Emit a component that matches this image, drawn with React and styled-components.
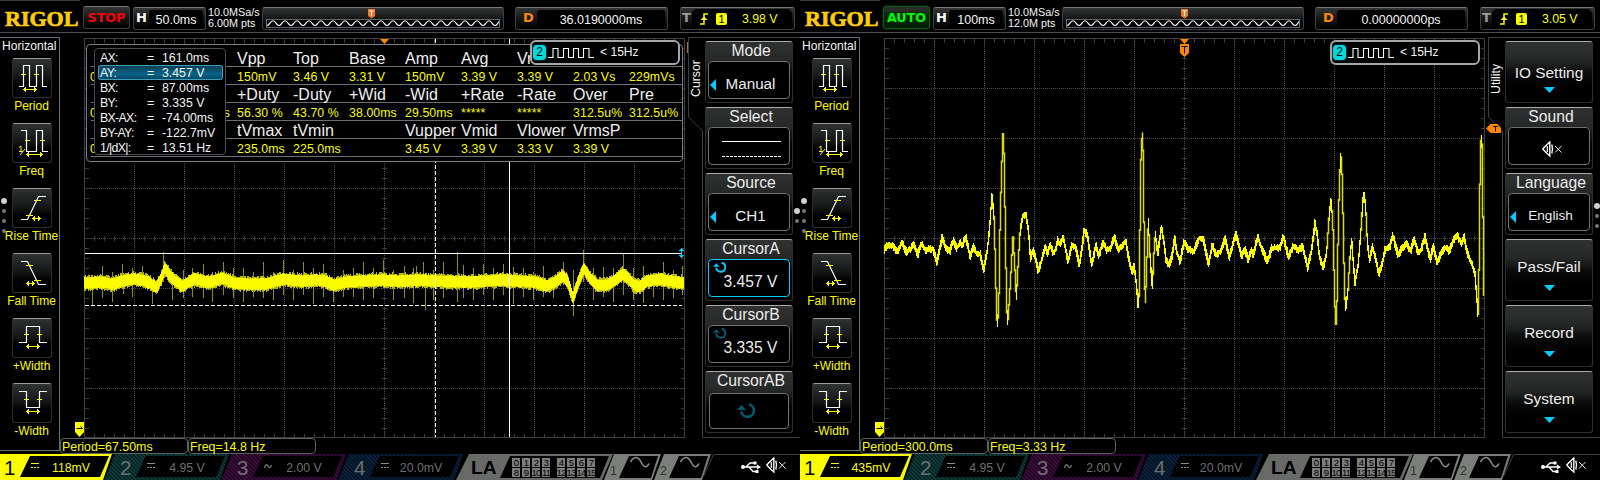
import React from "react";
import styled, { createGlobalStyle, css } from "styled-components";

const GlobalStyle = createGlobalStyle`
  html, body { margin: 0; padding: 0; background: #000; }
  body { overflow: hidden; font-family: "Liberation Sans", Arial, sans-serif; color: #f4f4f4; }
  * { box-sizing: border-box; }
  svg { display: block; }
`;

const YELLOW = "#fcfc00";
const CYAN = "#00ccff";
const ORANGE = "#ff8800";

const Bench = styled.main`
  display: flex;
  width: 1600px;
  height: 480px;
`;

const ScopeFrame = styled.section`
  display: flex;
  flex-direction: column;
  width: 800px;
  height: 480px;
  overflow: hidden;
  background: #000;
  white-space: nowrap;
`;

/* ---------- header ---------- */

const Header = styled.header`
  display: flex;
  align-items: flex-start;
  height: 33px;
  padding-top: 7px;
  border-bottom: 1px solid #4c4f4f;
`;

const Brand = styled.div`
  width: 80px;
  height: 33px;
  margin-top: -7px;
  padding: 7px 0 0 5px;
  border-top: 1px solid #3a3a3a;
  margin-right: 3px;
  font: 700 22px/22px "Liberation Serif", "Times New Roman", serif;
  color: #fccc0c;
  -webkit-text-stroke: 0.7px #fccc0c;
`;

const panelSkin = css`
  border: 1px solid #3c3f3f;
  border-top-color: #777a7a;
  border-radius: 3px;
  background: linear-gradient(#343636, #151616 50%, #000);
`;

const RunState = styled.div`
  ${panelSkin}
  width: 47px;
  height: 23px;
  margin: -1px 3px 0 0;
  text-align: center;
  font: 700 12.7px/21px "DejaVu Sans", sans-serif;
  color: ${(p) => (p.$running ? "#00fc00" : "#fc0000")};
  ${(p) =>
    p.$running &&
    css`
      border-color: #0b5a10;
      background: linear-gradient(#2a2c2a 20%, #03300a 24%, #021c05);
      box-shadow: 0 0 2px #0b6a10;
    `}
`;

const ReadoutBox = styled.div`
  ${panelSkin}
  display: flex;
  align-items: stretch;
  width: ${(p) => p.$width}px;
  height: 23px;
  margin-right: ${(p) => p.$after || 0}px;
`;

const ReadoutTag = styled.div`
  width: ${(p) => p.$width}px;
  padding-left: ${(p) => p.$indent}px;
  font: 700 13px/20px "DejaVu Sans", sans-serif;
  color: ${(p) => p.$color};
`;

const ReadoutValue = styled.div`
  flex: 1;
  display: flex;
  justify-content: center;
  margin: 2px 2px 0 0;
  border-radius: 3px;
  background: #000;
  font-size: 12.5px;
  line-height: 20px;
`;

const Sampling = styled.div`
  width: 54px;
  margin-top: 0;
  font-size: 10.8px;
  line-height: 11px;
`;

const MemoryBox = styled(ReadoutBox)`
  align-items: flex-start;
`;

const TriggerBody = styled.div`
  flex: 1;
  display: flex;
  align-items: center;
  gap: 8px;
  margin: 1px 2px 1px 0;
  padding-left: 8px;
  border-radius: 5px;
  background: #000;
  color: ${YELLOW};
  font-size: 12.3px;
`;

const TriggerSource = styled.span`
  width: 11px;
  height: 12px;
  margin-right: 7px;
  border-radius: 2px;
  background: ${YELLOW};
  color: #000;
  font-size: 11px;
  line-height: 12px;
  text-align: center;
`;

/* ---------- left side bar ---------- */

const Body = styled.div`
  display: flex;
  height: 421px;
`;

const Sidebar = styled.aside`
  position: relative;
  display: flex;
  flex-direction: column;
  width: 60px;
  height: 414px;
  margin-top: 4px;
  border: 1px solid #6c6f6f;
  border-left: 0;
`;

const SidebarTitle = styled.div`
  height: 20px;
  padding-left: 2px;
  font-size: 12.1px;
  line-height: 16px;
`;

const MeasureItem = styled.div`
  display: flex;
  flex-direction: column;
  align-items: center;
  width: 62px;
  height: 65px;
  padding-left: 1px;
`;

const MeasureIcon = styled.div`
  width: 40px;
  height: 40px;
  border: 1px solid #2c2e2e;
  border-top-color: #9a9c9c;
  border-radius: 3px;
  background: linear-gradient(#303232, #161717 45%, #000 70%);
  svg { margin: -1px; }
`;

const MeasureLabel = styled.div`
  padding-top: 1px;
  font-size: 12px;
  line-height: 15px;
  color: ${YELLOW};
`;

const PageDots = styled.div`
  position: absolute;
  left: ${(p) => p.$left}px;
  top: ${(p) => p.$top}px;
  display: flex;
  flex-direction: column;
  align-items: center;
  width: 6px;
  gap: 6px;
`;

const Dot = styled.i`
  width: ${(p) => (p.$on ? 6 : 4)}px;
  height: ${(p) => (p.$on ? 6 : 4)}px;
  margin-bottom: ${(p) => (p.$on ? -1 : 0)}px;
  border-radius: 50%;
  background: ${(p) => (p.$on ? "#d0d0d0" : "#777")};
`;

/* ---------- plot ---------- */

const PlotColumn = styled.div`
  position: relative;
  width: 627px;
`;

const Results = styled.div`
  display: flex;
`;

const Result = styled.div`
  width: 128px;
  height: 16px;
  padding-left: 1px;
  border: 1px solid #5f6262;
  border-radius: 4px;
  font-size: 12.4px;
  line-height: 16px;
  color: ${YELLOW};
`;

const MeasurePanel = styled.div`
  position: absolute;
  left: 26px;
  top: 11px;
  width: 597px;
  height: 118px;
  padding: 4px 0 0 4px;
  border: 1px solid #7c7f7f;
  border-radius: 4px;
  background: #000;
`;

const StatRow = styled.div`
  display: grid;
  grid-template-columns: 146px repeat(8, 56px);
  height: 18px;
  width: 591px;
  border-bottom: 1px solid #6c6f6f;
  font-size: ${(p) => (p.$head ? 16 : 12.3)}px;
  line-height: ${(p) => (p.$head ? 19 : 21)}px;
  color: ${(p) => (p.$head ? "#f0f0f0" : YELLOW)};
  letter-spacing: ${(p) => (p.$head ? 0 : 0.1)}px;
`;

const StatLead = styled.span`
  display: flex;
  justify-content: space-between;
  padding-right: 7px;
  margin-left: -1px;
`;

const CursorBox = styled.div`
  position: absolute;
  left: 34px;
  top: 15px;
  width: 132px;
  height: 107px;
  padding: 1px 2px 0 3px;
  border: 1px solid #4a4d4d;
  border-radius: 4px;
  background: #000;
`;

const CursorRow = styled.div`
  display: grid;
  grid-template-columns: 47px 15px 1fr;
  height: 15px;
  padding-left: 2px;
  border-radius: 3px;
  font-size: 12.3px;
  line-height: 16.5px;
  ${(p) =>
    p.$on &&
    css`
      background: linear-gradient(#0b3c52, #0a6386 60%, #04405c);
      box-shadow: inset 0 0 0 1px #3f9cbc;
    `}
`;

const CursorName = styled.span`
  letter-spacing: -0.65px;
`;

const FrequencyCounter = styled.div`
  position: absolute;
  left: 470px;
  top: 7px;
  display: flex;
  align-items: center;
  width: 150px;
  height: 25px;
  padding-left: 1px;
  border: 2px solid #a4a7a7;
  border-radius: 6px;
  background: #000;
  font-size: 12.1px;
`;

const CounterSource = styled.span`
  width: 13px;
  height: 15px;
  margin-right: 2px;
  border-radius: 4px;
  background: #00d8dc;
  box-shadow: 0 0 2px #00a0a4;
  color: #000;
  font-size: 12px;
  line-height: 15px;
  text-align: center;
`;

const CounterValue = styled.span`
  padding: 0 0 1px 6px;
`;

/* ---------- soft key menu ---------- */

const Menu = styled.aside`
  position: relative;
  display: flex;
  width: 113px;
`;

const MenuOutline = styled.svg`
  position: absolute;
  left: 0;
  top: 4px;
`;

const MenuTab = styled.div`
  width: 18px;
  height: 92px;
  display: flex;
  align-items: center;
  justify-content: center;
  writing-mode: vertical-rl;
  transform: rotate(180deg);
  font-size: 12.3px;
  line-height: 14px;
`;

const MenuKeys = styled.div`
  position: relative;
  display: flex;
  flex-direction: column;
  gap: 4px;
  padding-top: 8px;
`;

const Key = styled.div`
  display: flex;
  flex-direction: column;
  align-items: center;
  width: 88px;
  height: 62px;
  border: 1px solid #2d2f2f;
  border-top-color: #a8abab;
  border-radius: 3px;
  background: linear-gradient(#303232, #262828 30%, #0b0b0b 52%, #000 75%);
  color: #ececec;
`;

const KeyTitle = styled.div`
  height: 19px;
  padding-left: 4px;
  font-size: 15.7px;
  line-height: 17px;
`;

const KeyField = styled.div`
  position: relative;
  display: flex;
  align-items: center;
  justify-content: center;
  width: ${(p) => (p.$small ? 80 : 82)}px;
  height: ${(p) => (p.$small ? 36 : 38)}px;
  margin-top: ${(p) => (p.$small ? 2 : 0)}px;
  padding: 7px 0 0 3px;
  border: 1px solid ${(p) => (p.$on ? CYAN : "#6f7272")};
  border-radius: 4px;
  background: #000;
  font-size: ${(p) => p.$size || 15.6}px;
  line-height: 18px;
`;

const FieldMark = styled.svg`
  position: absolute;
  left: ${(p) => p.$left}px;
  top: ${(p) => p.$top}px;
`;

const KeyCaption = styled.div`
  height: 45px;
  padding-top: ${(p) => (p.$low ? 21 : 17)}px;
  font-size: 15.4px;
  line-height: 19px;
`;

const LevelFlag = styled.svg`
  position: absolute;
  left: ${(p) => p.$left}px;
  top: ${(p) => p.$top}px;
`;

/* ---------- channel bar ---------- */

const Footer = styled.footer`
  display: flex;
  height: 26px;
`;

const ChannelTab = styled.div`
  flex: none;
  display: flex;
  width: ${(p) => (p.$on ? 112 : 125)}px;
  height: 26px;
  margin-right: -8px;
  background: ${(p) =>
    p.$on ? p.$tone : `repeating-linear-gradient(45deg, ${p.$tone} 0 1.4px, ${p.$shade} 1.4px 2.8px)`};
  clip-path: ${(p) =>
    p.$on
      ? "polygon(0 0, 100% 0, 103px 100%, 0 100%)"
      : "polygon(11px 0, 100% 0, 116px 100%, 0 100%)"};
`;

const ChannelNumber = styled.span`
  width: ${(p) => (p.$on ? 20 : 32)}px;
  padding-left: ${(p) => (p.$on ? 4 : 16)}px;
  font-size: 20.5px;
  line-height: 27px;
  color: ${(p) => (p.$on ? "#000" : "#6d7070")};
`;

const ChannelWell = styled.div`
  display: flex;
  align-items: center;
  width: 89px;
  height: 21px;
  margin-top: 2px;
  padding-left: 11px;
  background: #000;
  clip-path: polygon(10px 0, 100% 0, 80px 100%, 0 100%);
  font-size: 12.3px;
  color: ${(p) => (p.$on ? YELLOW : "#6d7070")};
`;

const ChannelScale = styled.span`
  flex: 1;
  padding: 2px 6px 0 0;
  text-align: center;
`;

const LogicTab = styled.div`
  flex: none;
  display: flex;
  width: 157px;
  height: 26px;
  margin: 0 -9px 0 1px;
  background: #676a67;
  clip-path: polygon(13px 0, 100% 0, 146px 100%, 0 100%);
`;

const LogicName = styled.span`
  width: 44px;
  padding-left: 15px;
  font: 700 19.2px/27px "Liberation Sans", sans-serif;
  color: #000;
`;

const LogicWell = styled.div`
  display: grid;
  grid-template-columns: 8px 8px 8px 13px 8px 8px 8px 8px;
  column-gap: 2px;
  row-gap: 1px;
  align-content: center;
  width: 109px;
  height: 22px;
  margin-top: 2px;
  padding-left: 12px;
  background: #000;
  clip-path: polygon(10px 0, 100% 0, 100px 100%, 0 100%);
`;

const LogicBit = styled.span`
  display: flex;
  justify-content: center;
  width: 8px;
  height: 9px;
  background: #7b7e7b;
  color: #000;
  font-size: 9.5px;
  line-height: 10px;
  letter-spacing: -0.8px;
`;

const SourceTab = styled.div`
  flex: none;
  display: flex;
  width: 57px;
  height: 26px;
  margin-right: -7px;
  background: #7b7f7b;
  clip-path: polygon(10px 0, 100% 0, 48px 100%, 0 100%);
`;

const SourceNumber = styled.span`
  width: 15px;
  padding: 10px 0 0 6px;
  font-size: 12.5px;
  line-height: 14px;
  color: #303230;
`;

const SourceWell = styled.div`
  width: 39px;
  height: 22px;
  margin-top: 2px;
  padding-left: 10px;
  background: #000;
  clip-path: polygon(10px 0, 100% 0, 32px 100%, 0 100%);
`;

const StatusIcons = styled.svg`
  flex: none;
`;

/* ---------- signal data ---------- */

const noise = (seed) => {
  let s = seed;
  return () => {
    s = (s * 1103515245 + 12345) % 2147483648;
    return s / 2147483648;
  };
};

const sampler = (points) => (x) => {
  if (x <= points[0][0]) return points[0][1];
  for (let i = 1; i < points.length; i += 1) {
    if (x <= points[i][0]) {
      const [x0, y0] = points[i - 1];
      const [x1, y1] = points[i];
      return y0 + ((y1 - y0) * (x - x0)) / (x1 - x0);
    }
  }
  return points[points.length - 1][1];
};

const parse = (text, dx, dy) =>
  text.split(" ").map((pair) => {
    const [x, y] = pair.split(",").map(Number);
    return [dx + x / 3, dy + y / 3];
  });

const BASELINE =
  "84,283 100,282 113,284 122,281 133,279 143,280 150,283 154,286 157,287 161,279 165,268 170,276 176,281 183,286 190,281 195,279 207,282 214,281 222,278 230,281 235,283 250,284 266,284 275,281 285,279 300,281 315,280 325,281 334,285 345,282 360,281 380,280 400,281 420,280 440,281 470,282 500,280 520,281 535,282 547,286 555,282 563,276 568,282 573,298 578,283 584,268 590,278 597,285 607,285 615,280 623,274 628,278 635,286 640,286 647,281 660,279 670,281 684,283"
    .split(" ")
    .map((p) => p.split(",").map(Number));

const SPIKES_UP = [
  ...parse("307,318 337,335 367,312 397,325 428,318 491,276 550,330 577,325 610,312 638,335 670,306 700,325 730,325 760,335 790,306 820,335 851,300 880,330 910,306 940,325 970,312 1030,330 1060,325 1090,306 1120,325 1150,300 1180,330", 0, 160),
  ...parse("12,318 40,325 50,318 70,306 100,330 130,306 172,276 190,315 220,325 250,312 280,325 310,312 340,320 370,325 400,335 430,318 490,306 520,330 550,270 580,325 610,320 640,325 670,282 700,325 730,318 790,306 820,330 848,318", 400, 160),
];

const SPIKES_DOWN = [
  ...parse("277,435 307,413 337,425 370,402 397,410 458,432 517,420 550,415 577,410 610,415 638,425 670,405 700,415 730,425 760,410 790,415 820,420 851,405 880,420 910,405 940,432 970,410 1000,425 1030,410 1060,410 1090,420 1120,415 1180,420", 0, 160),
  ...parse("12,413 40,430 76,450 100,420 130,415 172,425 190,415 220,420 250,405 280,420 310,405 340,432 370,410 400,420 430,410 460,415 520,468 580,420 610,410 640,425 670,405 700,420 730,430 760,410 790,420 820,415 848,405", 400, 160),
];

const PULSES = [
  ...parse("12,392 22,375 40,378 52,395 66,368 78,395 92,388 101,368 113,405 125,370 138,392 150,385 160,388 171,430 186,352 197,385 209,395 220,362 230,385 240,370 248,375 257,348 270,410 279,382 290,400 300,402 311,450 322,390 328,330 336,228 342,290 346,420 350,590 353,618 357,520 360,330 364,180 369,42 373,120 376,330 380,560 383,612 388,540 394,440 399,352 404,430 409,535 414,440 420,340 428,288 438,285 445,330 450,395 452,415 458,390 464,405 475,455 485,420 497,378 502,405 509,372 520,400 528,385 533,360 540,372 550,352 564,425 576,375 588,385 598,438 605,390 613,328 623,350 635,435 648,375 656,410 669,365 680,392 692,385 703,350 715,390 725,380 737,362 745,410 755,455 763,440 770,500 774,555 778,520 782,140 787,35 790,120 793,400 796,560 800,440 805,300 810,410 817,505 822,400 826,340 833,405 844,320 852,370 858,420 868,435 878,400 884,350 890,395", 80, 120),
  ...parse("0,425 12,365 22,385 42,395 58,352 70,358 86,432 97,375 108,405 122,395 135,355 148,412 168,340 185,410 194,385 204,418 214,390 220,405 233,350 245,385 262,425 275,385 300,382 310,350 325,410 340,378 355,392 368,378 383,445 395,390 405,310 412,345 418,410 430,440 440,400 448,280 453,245 458,290 462,450 465,560 468,612 472,520 475,300 480,150 483,112 487,180 490,330 494,530 498,562 504,510 510,410 515,360 520,430 525,490 535,430 543,330 548,245 553,220 558,280 562,370 569,425 577,378 588,420 596,462 606,435 615,390 630,378 638,345 655,408 665,385 680,372 693,392 702,355 715,400 725,385 735,350 751,418 760,380 772,430 785,395 797,382 808,395 818,365 832,348 844,370 852,348 862,400 875,430 885,460 890,530 894,582 897,450 899,250 902,80 904,45 908,100 909,290 911,525", 380, 120),
];

/* ---------- drawings ---------- */

const vbars = (bars) => bars.map(([x, a, b]) => `M${x + 0.5} ${a.toFixed(1)}V${b.toFixed(1)}`).join("");

function NoisyTrace() {
  const at = sampler(BASELINE);
  const rnd = noise(7);
  const core = [];
  const fringe = [];
  for (let x = 84; x < 684; x += 1) {
    const c = at(x + 0.5);
    core.push([x, Math.round(c - 5 - rnd()), Math.round(c + 5 + rnd() * 1.5)]);
    fringe.push([x, Math.round(c - 5.4 - rnd() * 3), Math.round(c + 6 + rnd() * 2.4)]);
  }
  const spikes = [...SPIKES_UP, ...SPIKES_DOWN].map(([x, y]) => [Math.floor(x), Math.min(y, 282), Math.max(y, 282)]);
  return (
    <g shapeRendering="crispEdges" fill="none">
      <path d={vbars(spikes)} stroke="#8e8e00" />
      <path d={vbars(fringe)} stroke="#bcbc00" />
      <path d={vbars(core)} stroke={YELLOW} />
    </g>
  );
}

function PulseTrace() {
  const at = sampler(PULSES);
  const rnd = noise(21);
  const flat = [];
  const steep = [];
  for (let x = 84; x < 684; x += 1) {
    const ys = [0, 0.25, 0.5, 0.75, 1].map((d) => at(x + d));
    const lo = Math.min(...ys);
    const hi = Math.max(...ys);
    if (hi - lo > 14) steep.push([x, lo - 1, hi + 1]);
    else flat.push([x, Math.round(lo - 1.5 - rnd() * 2.6), Math.round(hi + 1.5 + rnd() * 2.6)]);
  }
  return (
    <g fill="none">
      <path d={vbars(steep)} stroke="#dcdc00" strokeWidth="1.5" />
      <path d={vbars(flat)} stroke={YELLOW} strokeWidth="1.1" />
    </g>
  );
}

function Graticule() {
  let dots = "";
  let ticks = "";
  for (let i = 1; i < 12; i += 1) dots += `M${84.5 + i * 50} 39V437`;
  for (let j = 1; j < 8; j += 1) dots += `M85 ${38.5 + j * 50}H684`;
  for (let i = 1; i < 60; i += 1) {
    const x = 84.5 + i * 10;
    const n = i % 5 === 0 ? 6 : 4;
    ticks += `M${x} 39v${n}M${x} 437v-${n - 1}M${x} 236v5`;
  }
  for (let j = 1; j < 40; j += 1) {
    const y = 38.5 + j * 10;
    const n = j % 5 === 0 ? 6 : 4;
    ticks += `M85 ${y}h${n}M684 ${y}h-${n - 1}M382 ${y}h5`;
  }
  return (
    <g shapeRendering="crispEdges" fill="none">
      <path d={dots} stroke="#484848" strokeDasharray="1 1" />
      <path d={ticks} stroke="#3c3c3c" />
      <rect x="84.5" y="38.5" width="600" height="399" stroke="#3e4040" />
    </g>
  );
}

function Cursors() {
  return (
    <g shapeRendering="crispEdges" stroke="#fff" fill="none">
      <path d="M85 253.5H681M509.5 39V437" />
      <path d="M85 305.5H682M435.5 39V437" strokeDasharray="4 2" />
      <path d="M679 250.5h5M680 249.5h3M681.5 248v10M680 256.5h3M679 255.5h5" stroke={CYAN} />
    </g>
  );
}

function Plot({ kind }) {
  return (
    <svg width="627" height="405" viewBox="60 33 627 405">
      <Graticule />
      {kind === "noisy" ? <NoisyTrace /> : <PulseTrace />}
      {kind === "noisy" && <Cursors />}
      <path d="M380 39h9l-4.5 5z" fill={ORANGE} />
      {kind === "pulse" && (
        <>
          <path d="M380 44h9v9l-4.5 4-4.5-4z" fill={ORANGE} />
          <path d="M381.5 46.5h6M384.5 46.5v7" stroke="#000" fill="none" />
        </>
      )}
      <path d="M75 422h9v10l-4.5 5-4.5-5z" fill={YELLOW} />
      <path d="M76.5 428.5h6M80.5 426.5l2 2" stroke="#000" fill="none" />
    </svg>
  );
}

const arrow = (a, b, y) =>
  `M${a} ${y}H${b}M${a + 1.5} ${y - 1.5}v3M${a + 2.5} ${y - 2.5}v5M${b - 1.5} ${y - 1.5}v3M${b - 2.5} ${y - 2.5}v5`;

const MEASURES = [
  { name: "Period", wave: "M7 28.5H11.5V7.5H17.5V28.5H24.5V7.5H30.5V28.5H35", marks: "M9 16.5h5M22 16.5h5" + arrow(11, 25, 31.5) },
  { name: "Freq", wave: "M9 7.5H14.5V28.5H24.5V7.5H30.5V28.5H36", marks: "M13 17.5h5M28 17.5h5" + arrow(14, 31, 31.5), fraction: true },
  { name: "Rise Time", wave: "M9 31.5H15.5L26.5 8.5H34", marks: "M22 12.5h7M14 27.5h7" + arrow(20, 29, 30.5) },
  { name: "Fall Time", wave: "M9 8.5H15.5L26.5 31.5H34", marks: "M14 12.5h7M22 27.5h7" + arrow(14, 23, 30.5) },
  { name: "+Width", wave: "M7 24.5H14.5V8.5H27.5V24.5H35", marks: "M12 16.5h5M25 16.5h5" + arrow(14, 28, 28.5) },
  { name: "-Width", wave: "M7 8.5H14.5V24.5H27.5V8.5H35", marks: "M12 16.5h5M25 16.5h5" + arrow(14, 28, 28.5) },
];

function Speaker({ x = 0, y = 0 }) {
  return (
    <g transform={`translate(${x} ${y})`} fill="none" stroke="#fff">
      <path d="M0.800 8 3.500 5 7.800 1V15L3.500 11z" strokeWidth="1.4" />
      <path d="M5.300 5v6" strokeWidth="1.200" />
      <path d="M9.800 3.500q1.400 4.500 0 9" strokeWidth="1.3" />
      <path d="M13 5l6.500 6.500M19.500 5l-6.500 6.500" strokeWidth="0.9" />
    </g>
  );
}

function KnobMark({ size = 12, color = CYAN, ...rest }) {
  return (
    <FieldMark width={size} height={size} viewBox="0 0 12 12" {...rest}>
      <path d="M8 1.6A4.2 4.2 0 1 1 2.900 6.200" fill="none" stroke={color} strokeWidth="1.7" />
      <path d="M0 5.400 3 2l3 3.400z" fill={color} />
    </FieldMark>
  );
}

/* ---------- sections ---------- */

function MemoryBar({ marker }) {
  let d = "M4 17.5";
  for (let x = 5; x < 236; x += 12) d += "q1.5 0 3-2.4t3-2.4t3 2.4t3 2.4";
  return (
    <MemoryBox $width={242} $after={11}>
      <svg width="240" height="21" viewBox="0 0 240 21">
        <clipPath id="record">
          <rect x="4" y="11" width="232" height="9" />
        </clipPath>
        <rect x="3.5" y="11.5" width="233" height="8" fill="#000" stroke="#5f6565" />
        <path d="M3.5 12v7M236.5 12v7" stroke="#4c7c9c" />
        <path d={d} fill="none" stroke="#fff" strokeWidth="1.1" clipPath="url(#record)" />
        <g transform={`translate(${marker} 1)`}>
          <path d="M0 0h7v7L3.500 9.500 0 7z" fill="#f07828" />
          <path d="M1.500 2h4M3.500 2v5" stroke="#fff" fill="none" />
        </g>
      </svg>
    </MemoryBox>
  );
}

function TopBar({ scope }) {
  return (
    <Header>
      <Brand>RIGOL</Brand>
      <RunState $running={scope.running}>{scope.running ? "AUTO" : "STOP"}</RunState>
      <ReadoutBox $width={73} $after={2}>
        <ReadoutTag $width={15} $indent={2} $color="#fff">H</ReadoutTag>
        <ReadoutValue>{scope.timebase}</ReadoutValue>
      </ReadoutBox>
      <Sampling>
        <div>10.0MSa/s</div>
        <div>{scope.depth}</div>
      </Sampling>
      <MemoryBar marker={scope.memoryMarker} />
      <ReadoutBox $width={153} $after={12}>
        <ReadoutTag $width={21} $indent={7} $color={ORANGE}>D</ReadoutTag>
        <ReadoutValue>{scope.delay}</ReadoutValue>
      </ReadoutBox>
      <ReadoutBox $width={115}>
        <ReadoutTag $width={11} $indent={1} $color="#9a9c9c">T</ReadoutTag>
        <TriggerBody>
          <svg width="8" height="12" viewBox="0 0 8 12">
            <path d="M0 11h4V1h4" fill="none" stroke={YELLOW} strokeWidth="1.5" />
            <path d="M0.500 7 4 3.500 7.500 7z" fill={YELLOW} />
          </svg>
          <TriggerSource>1</TriggerSource>
          {scope.level}
        </TriggerBody>
      </ReadoutBox>
    </Header>
  );
}

function MeasureBar() {
  return (
    <Sidebar>
      <SidebarTitle>Horizontal</SidebarTitle>
      {MEASURES.map((m) => (
        <MeasureItem key={m.name}>
          <MeasureIcon>
            <svg width="40" height="40" fill="none">
              <path d={m.wave} stroke="#fff" strokeWidth="1.2" />
              <path d={m.marks} stroke={YELLOW} />
              {m.fraction && <path d="M7 24.500l2-1.500v5M7 28.500h4M8 32l5-6" stroke={YELLOW} />}
            </svg>
          </MeasureIcon>
          <MeasureLabel>{m.name}</MeasureLabel>
        </MeasureItem>
      ))}
      <PageDots $left={1} $top={160}>
        <Dot $on />
        <Dot />
        <Dot />
        <Dot />
      </PageDots>
    </Sidebar>
  );
}

const STATS = [
  ["Vpp", "Top", "Base", "Amp", "Avg", "Vr", "", ""],
  ["150mV", "3.46 V", "3.31 V", "150mV", "3.39 V", "3.39 V", "2.03 Vs", "229mVs"],
  ["+Duty", "-Duty", "+Wid", "-Wid", "+Rate", "-Rate", "Over", "Pre"],
  ["56.30 %", "43.70 %", "38.00ms", "29.50ms", "*****", "*****", "312.5u%", "312.5u%"],
  ["tVmax", "tVmin", "", "Vupper", "Vmid", "Vlower", "VrmsP", ""],
  ["235.0ms", "225.0ms", "", "3.45 V", "3.39 V", "3.33 V", "3.39 V", ""],
];

const CURSOR_READOUT = [
  ["AX:", "161.0ms"],
  ["AY:", "3.457 V"],
  ["BX:", "87.00ms"],
  ["BY:", "3.335 V"],
  ["BX-AX:", "-74.00ms"],
  ["BY-AY:", "-122.7mV"],
  ["1/|dX|:", "13.51 Hz"],
];

function Statistics() {
  return (
    <>
      <MeasurePanel>
        {STATS.map((row, i) => (
          <StatRow key={i} $head={i % 2 === 0}>
            <StatLead>
              {i % 2 === 1 && <span>0</span>}
              {i === 3 && <span>s</span>}
            </StatLead>
            {row.map((cell, j) => (
              <span key={j}>{cell}</span>
            ))}
          </StatRow>
        ))}
      </MeasurePanel>
      <CursorBox>
        {CURSOR_READOUT.map(([name, value], i) => (
          <CursorRow key={name} $on={i === 1}>
            <CursorName>{name}</CursorName>
            <span>=</span>
            <span>{value}</span>
          </CursorRow>
        ))}
      </CursorBox>
    </>
  );
}

function Counter() {
  return (
    <FrequencyCounter>
      <CounterSource>2</CounterSource>
      <svg width="46" height="12" viewBox="0 0 46 12">
        <path d="M0 10.500H5V1.500H10V10.500H15.500V1.500H20.500V10.500H25.500V1.500H30.500V10.500H35.500V1.500H41V10.500H46" fill="none" stroke="#fff" strokeWidth="1.1" />
      </svg>
      <CounterValue>&lt; 15Hz</CounterValue>
    </FrequencyCounter>
  );
}

function SoftKey({ item }) {
  if (item.opens) {
    return (
      <Key>
        <KeyCaption $low={item.low}>{item.title}</KeyCaption>
        <svg width="11" height="6">
          <path d="M0 0h11L5.500 6z" fill={CYAN} />
        </svg>
      </Key>
    );
  }
  return (
    <Key>
      <KeyTitle>{item.title}</KeyTitle>
      <KeyField $on={item.on} $small={item.small} $size={item.size}>
        {item.list && (
          <FieldMark $left={1} $top={17} width="6" height="12">
            <path d="M6 0v12L0 6z" fill={CYAN} />
          </FieldMark>
        )}
        {item.knob && <KnobMark $left={item.small ? 27 : 4} $top={item.small ? 8 : 1} size={item.small ? 18 : 13} color={item.knob} />}
        {item.drawing === "lines" && (
          <FieldMark $left={13} $top={13} width="60" height="18" shapeRendering="crispEdges">
            <path d="M0 0.500h59" stroke="#fff" />
            <path d="M0 15.500h59" stroke="#fff" strokeDasharray="3 1" />
          </FieldMark>
        )}
        {item.drawing === "mute" && (
          <FieldMark $left={33} $top={13} width="22" height="17">
            <Speaker />
          </FieldMark>
        )}
        {item.value}
      </KeyField>
    </Key>
  );
}

function SideMenu({ scope }) {
  return (
    <Menu>
      <MenuOutline width="113" height="402">
        <path d="M113 0.500H1.500V80L15.500 94V400.500H113" fill="none" stroke="#3e4040" />
      </MenuOutline>
      <MenuTab>{scope.menu}</MenuTab>
      <MenuKeys>
        {scope.keys.map((item) => (
          <SoftKey key={item.title} item={item} />
        ))}
      </MenuKeys>
      {scope.kind === "noisy" ? (
        <LevelFlag $left={-1} $top={9} width="2" height="12">
          <path d="M1.500 0v11" stroke="#c86c10" />
        </LevelFlag>
      ) : (
        <LevelFlag $left={-1} $top={91} width="15" height="10">
          <path d="M0 4.500 4.500 0H11.500l3.500 4v5H4.500z" fill={ORANGE} />
          <path d="M7 2.500h5M9.500 2.500v5" stroke="#000" />
        </LevelFlag>
      )}
      <PageDots $left={107} $top={scope.dotsTop}>
        <Dot $on />
        {scope.dots.map((d) => (
          <Dot key={d} />
        ))}
      </PageDots>
    </Menu>
  );
}

function Coupling({ ac, color }) {
  return (
    <svg width="8" height="7" fill="none" stroke={color}>
      {ac ? (
        <path d="M0.500 5q1.500-5.500 3.500-2t3.500-1" strokeWidth="1.1" />
      ) : (
        <path d="M0 0.500h8M0 4.500h2M3 4.500h2M6 4.500h2" shapeRendering="crispEdges" />
      )}
    </svg>
  );
}

function BottomBar({ scope }) {
  const channels = [
    { n: 1, on: true, scale: scope.scale, tone: YELLOW, shade: YELLOW },
    { n: 2, scale: "4.95 V", tone: "#0a3c3a", shade: "#052220" },
    { n: 3, scale: "2.00 V", tone: "#3c0a3c", shade: "#200520", ac: true },
    { n: 4, scale: "20.0mV", tone: "#08223e", shade: "#041222" },
  ];
  const bits = [0, 1, 2, 3, 4, 5, 6, 7, 8, 9, 10, 11, 12, 13, 14, 15];
  return (
    <Footer>
      {channels.map((c) => (
        <ChannelTab key={c.n} $on={c.on} $tone={c.tone} $shade={c.shade}>
          <ChannelNumber $on={c.on}>{c.n}</ChannelNumber>
          <ChannelWell $on={c.on}>
            <Coupling ac={c.ac} color={c.on ? YELLOW : "#8a8c8c"} />
            <ChannelScale>{c.scale}</ChannelScale>
          </ChannelWell>
        </ChannelTab>
      ))}
      <LogicTab>
        <LogicName>LA</LogicName>
        <LogicWell>
          {bits.map((b) => (
            <LogicBit key={b}>{b}</LogicBit>
          ))}
        </LogicWell>
      </LogicTab>
      {[1, 2].map((n) => (
        <SourceTab key={n}>
          <SourceNumber>{n}</SourceNumber>
          <SourceWell>
            <svg width="26" height="14">
              <path d="M1.500 6C5 0 9 0 12 6s6 6 8 1.500" fill="none" stroke="#8a8c8a" strokeWidth="1.600" />
            </svg>
          </SourceWell>
        </SourceTab>
      ))}
      <StatusIcons width="97" height="26" viewBox="703 454 97 26">
        <path d="M701 480 712.500 454.500H800" fill="none" stroke="#3e4040" />
        <g stroke="#fff" fill="none">
          <path d="M742 467H757M745 467l4-4h4M748 467l4 4.500h3" strokeWidth="1.300" />
        </g>
        <circle cx="742" cy="467" r="2" fill="#fff" />
        <path d="M756 464.500v5l4-2.500z" fill="#fff" />
        <path d="M752.500 461.500h3v3h-3zM754.500 470h3v3h-3z" fill="#fff" />
        <Speaker x={765} y={457} />
      </StatusIcons>
    </Footer>
  );
}

function Scope({ scope }) {
  return (
    <ScopeFrame>
      <TopBar scope={scope} />
      <Body>
        <MeasureBar />
        <PlotColumn>
          <Plot kind={scope.kind} />
          {scope.kind === "noisy" && <Statistics />}
          <Counter />
          <Results>
            <Result>{scope.period}</Result>
            <Result>{scope.freq}</Result>
          </Results>
        </PlotColumn>
        <SideMenu scope={scope} />
      </Body>
      <BottomBar scope={scope} />
    </ScopeFrame>
  );
}

const LEFT = {
  kind: "noisy",
  running: false,
  timebase: "50.0ms",
  depth: "6.00M pts",
  memoryMarker: 105,
  delay: "36.0190000ms",
  level: "3.98 V",
  period: "Period=67.50ms",
  freq: "Freq=14.8 Hz",
  scale: "118mV",
  menu: "Cursor",
  dotsTop: 175,
  dots: [1],
  keys: [
    { title: "Mode", value: "Manual", list: true, size: 15.2 },
    { title: "Select", drawing: "lines" },
    { title: "Source", value: "CH1", list: true, size: 15.2 },
    { title: "CursorA", value: "3.457 V", knob: CYAN, on: true },
    { title: "CursorB", value: "3.335 V", knob: "#005c74" },
    { title: "CursorAB", knob: "#005c74", small: true },
  ],
};

const RIGHT = {
  kind: "pulse",
  running: true,
  timebase: "100ms",
  depth: "12.0M pts",
  memoryMarker: 118,
  delay: "0.00000000ps",
  level: "3.05 V",
  period: "Period=300.0ms",
  freq: "Freq=3.33 Hz",
  scale: "435mV",
  menu: "Utility",
  dotsTop: 170,
  dots: [1, 2],
  keys: [
    { title: "IO Setting", opens: true, low: true },
    { title: "Sound", drawing: "mute" },
    { title: "Language", value: "English", list: true, size: 13.6 },
    { title: "Pass/Fail", opens: true },
    { title: "Record", opens: true },
    { title: "System", opens: true },
  ],
};

export default function App() {
  return (
    <>
      <GlobalStyle />
      <Bench>
        <Scope scope={LEFT} />
        <Scope scope={RIGHT} />
      </Bench>
    </>
  );
}
